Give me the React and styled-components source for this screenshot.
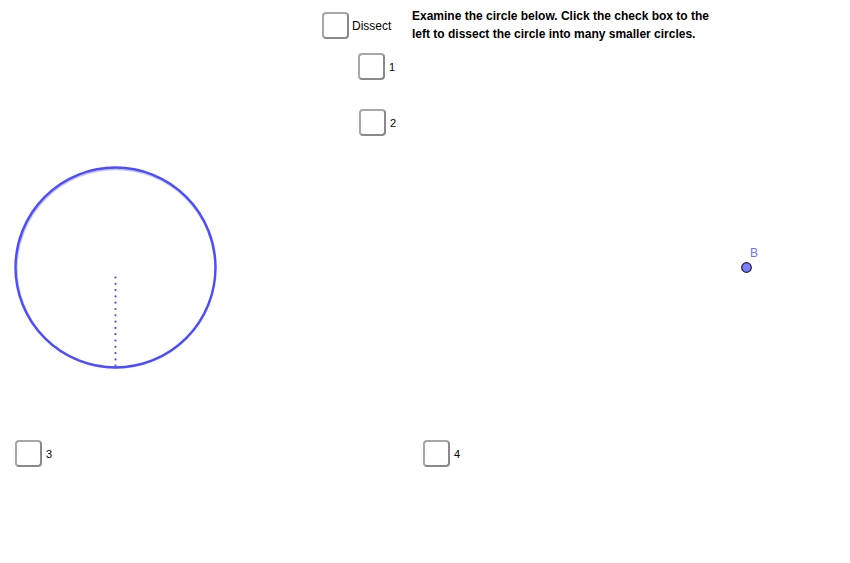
import React from "react";
import styled, { createGlobalStyle } from "styled-components";

const Global = createGlobalStyle`
  html, body { margin: 0; padding: 0; background: #fff; }
  body { font-family: "Liberation Sans", Arial, sans-serif; }
`;

const Canvas = styled.div`
  position: relative;
  width: 850px;
  height: 563px;
  overflow: hidden;
  background: #fff;
`;

const Placed = styled.div`
  position: absolute;
  left: ${(p) => p.$x}px;
  top: ${(p) => p.$y}px;
`;

const CheckWidget = styled(Placed)`
  display: flex;
  align-items: center;
  gap: ${(p) => p.$gap}px;
`;

const Box = styled.div`
  width: 23px;
  height: 23px;
  border: 2px solid #8a8a8a;
  border-top-color: #a8a8a8;
  border-left-color: #a8a8a8;
  border-radius: 4px;
  background: #fff;
`;

const Label = styled.span`
  font-size: ${(p) => p.$size}px;
  color: #000;
  line-height: 14px;
`;

const Caption = styled(Placed)`
  font-size: 12px;
  font-weight: bold;
  line-height: 18px;
  color: #000;
  width: 340px;
`;

const Drawing = styled.svg`
  position: absolute;
  left: 0;
  top: 0;
`;

const PointLabel = styled(Placed)`
  font-size: 12px;
  color: #6f6fff;
`;

function Check({ x, y, label, gap = 4, size = 11 }) {
  return (
    <CheckWidget $x={x} $y={y} $gap={gap}>
      <Box />
      <Label $size={size}>{label}</Label>
    </CheckWidget>
  );
}

export default function App() {
  const dots = [];
  for (let i = 0; i < 15; i++) {
    dots.push(<circle key={i} cx={115.5} cy={277.5 + i * 6.3} r={1.1} fill="#4d4dff" />);
  }
  return (
    <Canvas>
      <Global />
      <Drawing width="850" height="563">
        <circle cx="116" cy="268.5" r="99.3" fill="none" stroke="#c8c8f4" strokeWidth="2" />
        <circle cx="115.5" cy="267.5" r="100" fill="none" stroke="#4d4dff" strokeWidth="2.4" />
        {dots}
        <circle cx="746.5" cy="267.5" r="4.8" fill="#7d7dff" stroke="#1e1e3a" strokeWidth="1.2" />
      </Drawing>
      <PointLabel $x={750} $y={246}>B</PointLabel>
      <Check x={322} y={12} label="Dissect" gap={3} size={12} />
      <Check x={358} y={53} label="1" />
      <Check x={359} y={109} label="2" />
      <Check x={15} y={440} label="3" />
      <Check x={423} y={440} label="4" />
      <Caption $x={412} $y={7}>
        Examine the circle below. Click the check box to the
        <br />
        left to dissect the circle into many smaller circles.
      </Caption>
    </Canvas>
  );
}
